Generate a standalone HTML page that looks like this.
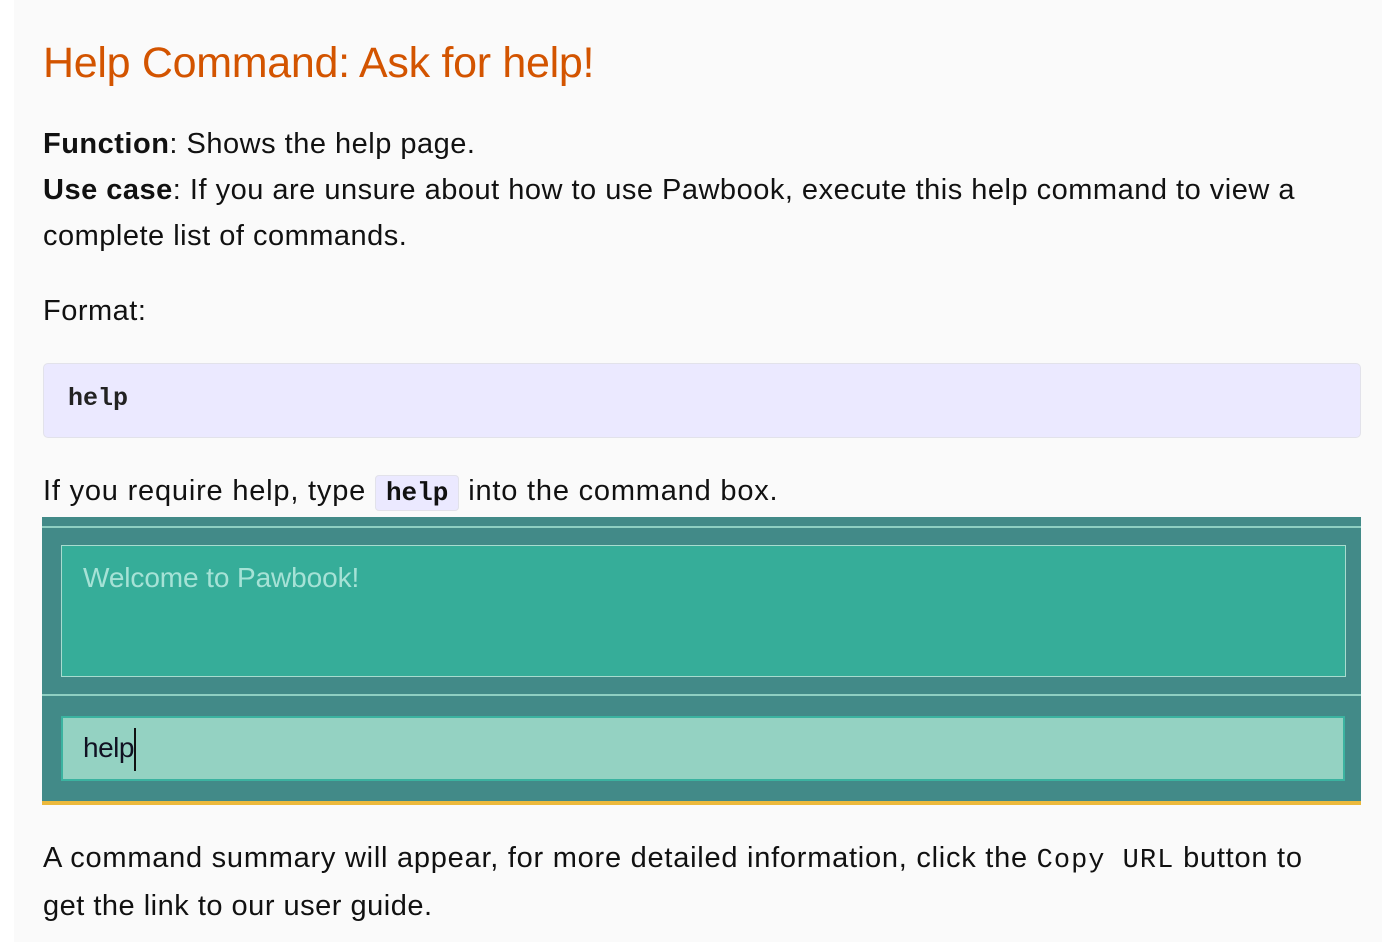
<!DOCTYPE html>
<html><head><meta charset="utf-8">
<style>
html,body{margin:0;padding:0;background:#fff;}
body{width:1382px;height:942px;overflow:hidden;position:relative;font-family:"Liberation Sans","DejaVu Sans",sans-serif;color:#111;}
.page{position:absolute;left:14px;top:0;width:1368px;height:942px;background:#fafafa;}
.t{position:absolute;left:43px;white-space:nowrap;font-size:29px;letter-spacing:0.5px;}
h1{position:absolute;left:43px;top:39px;margin:0;font-weight:normal;font-size:43px;color:#d35400;letter-spacing:-0.3px;white-space:nowrap;}
.code{position:absolute;left:43px;top:363px;width:1318px;height:75px;background:#ebe9ff;border:1px solid #e2e2ea;border-radius:5px;box-sizing:border-box;}
.mono{font-family:"Liberation Mono","DejaVu Sans Mono",monospace;}
.ic{background:#ebe9ff;border:1px solid #e2e2ea;border-radius:4px;padding:2px 10px;font-size:26px;letter-spacing:0;}
</style></head><body>
<div class="page"></div>
<h1>Help Command: Ask for help!</h1>
<div class="t" style="top:128px"><b>Function</b>: Shows the help page.</div>
<div class="t" style="top:174px"><b>Use case</b>: If you are unsure about how to use Pawbook, execute this help command to view a</div>
<div class="t" style="top:220px">complete list of commands.</div>
<div class="t" style="top:295px">Format:</div>
<div class="code"><span class="mono" style="position:absolute;left:24px;top:20px;font-size:25px;font-weight:bold;color:#222">help</span></div>
<div class="t" style="top:475px;letter-spacing:0.8px">If you require help, type <span class="mono ic" style="font-weight:bold">help</span> into the command box.</div>

<div style="position:absolute;left:42px;top:517px;width:1319px;height:284px;background:#428a88;"></div>
<div style="position:absolute;left:42px;top:526px;width:1319px;height:2px;background:#8fcfc2;"></div>
<div style="position:absolute;left:61px;top:545px;width:1285px;height:132px;background:#36ad99;border:1px solid #a8dccf;box-sizing:border-box;"></div>
<div style="position:absolute;left:83px;top:562px;font-size:28px;color:#a6e2d6;letter-spacing:-0.1px;">Welcome to Pawbook!</div>
<div style="position:absolute;left:42px;top:694px;width:1319px;height:2px;background:#8fcfc2;"></div>
<div style="position:absolute;left:61px;top:716px;width:1284px;height:65px;background:#94d2c2;border:2px solid #3bb3a0;box-sizing:border-box;"></div>
<div style="position:absolute;left:83px;top:732px;font-size:28px;color:#112;letter-spacing:-0.5px;">help</div>
<div style="position:absolute;left:134px;top:728px;width:2px;height:43px;background:#111;"></div>
<div style="position:absolute;left:42px;top:801px;width:1319px;height:4px;background:#ecb93c;"></div>

<div class="t" style="top:842px;letter-spacing:0.75px">A command summary will appear, for more detailed information, click the <span class="mono" style="font-size:27px;letter-spacing:1px">Copy URL</span> button to</div>
<div class="t" style="top:890px">get the link to our user guide.</div>
</body></html>
